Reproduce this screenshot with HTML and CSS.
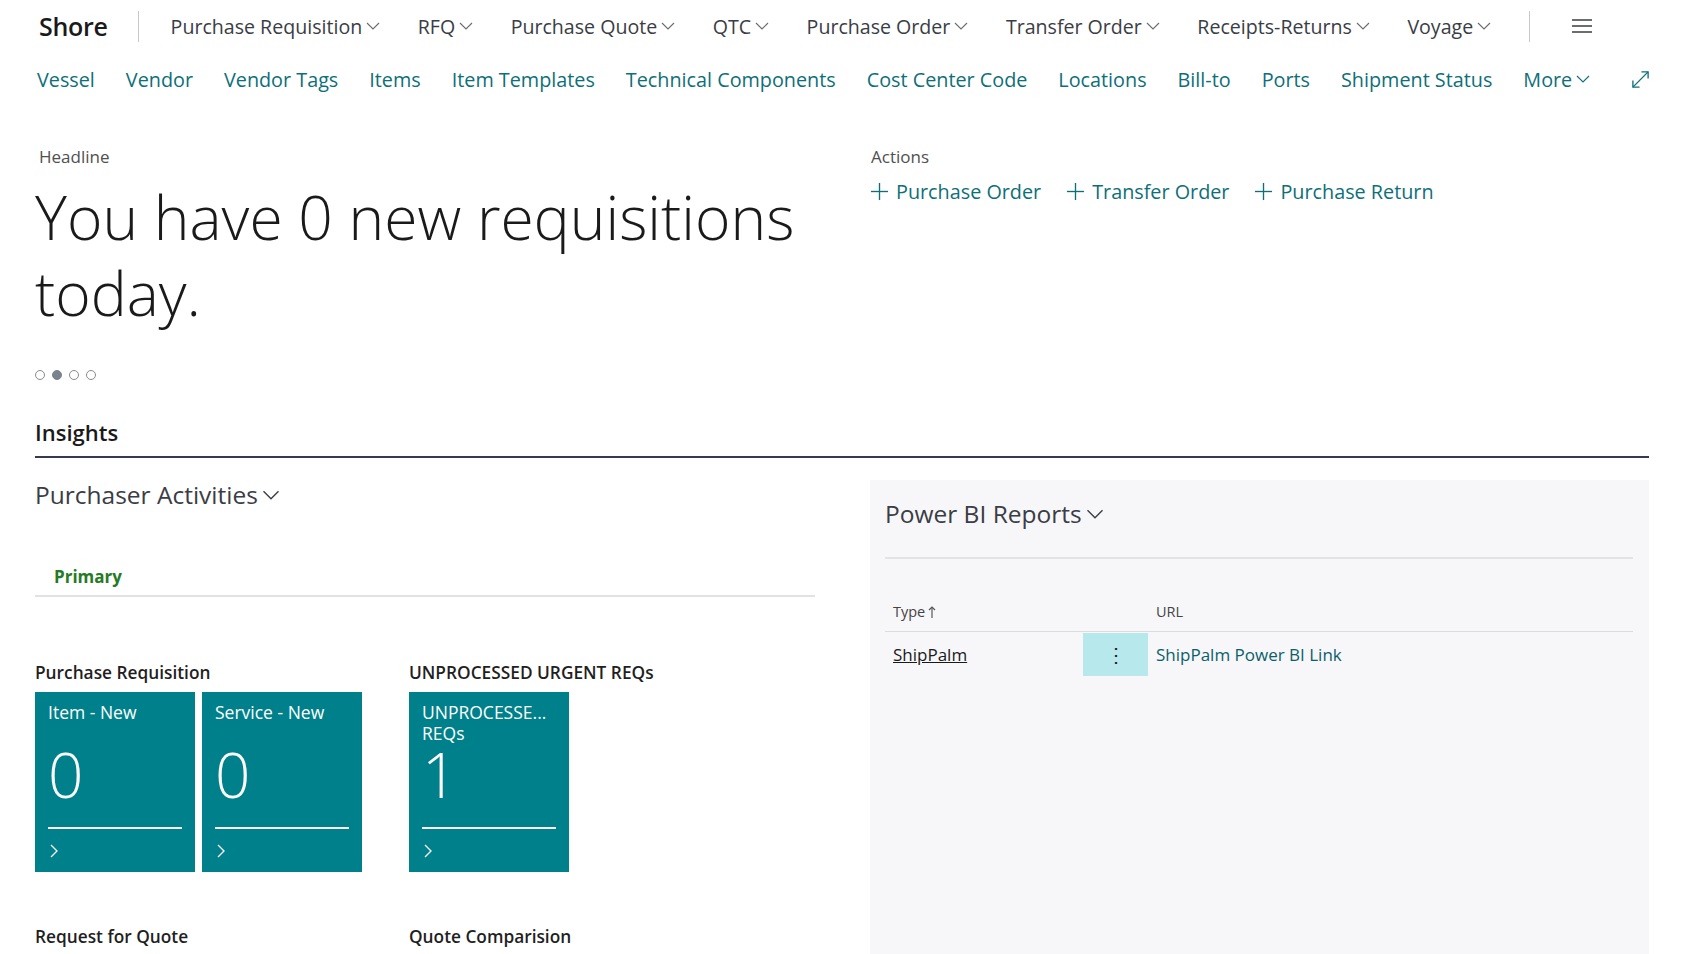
FILE: index.html
```html
<!DOCTYPE html>
<html lang="en">
<head>
<meta charset="utf-8">
<title>Shore</title>
<link rel="stylesheet" href="styles.css">
</head>
<body>
<header class="topbar">
  <div class="brand">Shore</div>
  <div class="vsep"></div>
  <nav class="menu">
    <span class="menu-item">Purchase Requisition<svg class="chev" viewBox="0 0 14 8"><polyline points="1,1 7,7 13,1"/></svg></span>
    <span class="menu-item">RFQ<svg class="chev" viewBox="0 0 14 8"><polyline points="1,1 7,7 13,1"/></svg></span>
    <span class="menu-item">Purchase Quote<svg class="chev" viewBox="0 0 14 8"><polyline points="1,1 7,7 13,1"/></svg></span>
    <span class="menu-item">QTC<svg class="chev" viewBox="0 0 14 8"><polyline points="1,1 7,7 13,1"/></svg></span>
    <span class="menu-item">Purchase Order<svg class="chev" viewBox="0 0 14 8"><polyline points="1,1 7,7 13,1"/></svg></span>
    <span class="menu-item">Transfer Order<svg class="chev" viewBox="0 0 14 8"><polyline points="1,1 7,7 13,1"/></svg></span>
    <span class="menu-item">Receipts-Returns<svg class="chev" viewBox="0 0 14 8"><polyline points="1,1 7,7 13,1"/></svg></span>
    <span class="menu-item">Voyage<svg class="chev" viewBox="0 0 14 8"><polyline points="1,1 7,7 13,1"/></svg></span>
  </nav>
  <div class="vsep vsep-right"></div>
  <svg class="hamburger" viewBox="0 0 20 14"><line x1="0" y1="1" x2="20" y2="1"/><line x1="0" y1="7" x2="20" y2="7"/><line x1="0" y1="13" x2="20" y2="13"/></svg>
</header>

<nav class="links">
  <span>Vessel</span>
  <span>Vendor</span>
  <span>Vendor Tags</span>
  <span>Items</span>
  <span>Item Templates</span>
  <span>Technical Components</span>
  <span>Cost Center Code</span>
  <span>Locations</span>
  <span>Bill-to</span>
  <span>Ports</span>
  <span>Shipment Status</span>
  <span class="more">More<svg class="chev" viewBox="0 0 14 8"><polyline points="1,1 7,7 13,1"/></svg></span>
  <svg class="expand" viewBox="0 0 20 20"><line x1="2" y1="18" x2="18" y2="2"/><polyline points="11,2 18,2 18,9"/><polyline points="2,11 2,18 9,18"/></svg>
</nav>

<main class="page">
  <section class="top-grid">
    <div class="headline">
      <div class="caption">Headline</div>
      <div class="big">You have 0 new requisitions today.</div>
      <div class="dots"><span></span><span class="on"></span><span></span><span></span></div>
    </div>
    <div class="actions">
      <div class="caption">Actions</div>
      <div class="action-list">
        <span class="action"><svg class="plus" viewBox="0 0 20 20"><line x1="10" y1="1" x2="10" y2="19"/><line x1="1" y1="10" x2="19" y2="10"/></svg>Purchase Order</span>
        <span class="action"><svg class="plus" viewBox="0 0 20 20"><line x1="10" y1="1" x2="10" y2="19"/><line x1="1" y1="10" x2="19" y2="10"/></svg>Transfer Order</span>
        <span class="action"><svg class="plus" viewBox="0 0 20 20"><line x1="10" y1="1" x2="10" y2="19"/><line x1="1" y1="10" x2="19" y2="10"/></svg>Purchase Return</span>
      </div>
    </div>
  </section>

  <h2 class="insights">Insights</h2>

  <section class="parts">
    <div class="activities">
      <div class="part-title">Purchaser Activities<svg class="chev chev-lg" viewBox="0 0 14 8"><polyline points="1,1 7,7 13,1"/></svg></div>
      <div class="tabs"><span class="tab">Primary</span></div>
      <div class="cue-grid">
        <div class="cue-group">
          <div class="cue-label">Purchase Requisition</div>
          <div class="tiles">
            <div class="tile"><div class="tile-title">Item - New</div><div class="tile-num">0</div><div class="tile-foot"><svg class="tchev" viewBox="0 0 8 14"><polyline points="1,1 7,7 1,13"/></svg></div></div>
            <div class="tile"><div class="tile-title">Service - New</div><div class="tile-num">0</div><div class="tile-foot"><svg class="tchev" viewBox="0 0 8 14"><polyline points="1,1 7,7 1,13"/></svg></div></div>
          </div>
        </div>
        <div class="cue-group">
          <div class="cue-label">UNPROCESSED URGENT REQs</div>
          <div class="tiles">
            <div class="tile"><div class="tile-title">UNPROCESSE...<br>REQs</div><div class="tile-num">1</div><div class="tile-foot"><svg class="tchev" viewBox="0 0 8 14"><polyline points="1,1 7,7 1,13"/></svg></div></div>
          </div>
        </div>
        <div class="cue-group">
          <div class="cue-label">Request for Quote</div>
        </div>
        <div class="cue-group">
          <div class="cue-label">Quote Comparision</div>
        </div>
      </div>
    </div>

    <div class="powerbi">
      <div class="part-title">Power BI Reports<svg class="chev chev-lg" viewBox="0 0 14 8"><polyline points="1,1 7,7 13,1"/></svg></div>
      <div class="pbi-rule"></div>
      <div class="table">
        <div class="thead">
          <span class="c-type">Type <svg class="sort" viewBox="0 0 8 12"><line x1="4" y1="1" x2="4" y2="12"/><polyline points="1,4 4,1 7,4"/></svg></span>
          <span class="c-menu"></span>
          <span class="c-url">URL</span>
        </div>
        <div class="trow">
          <span class="c-type"><span class="ulink">ShipPalm</span></span>
          <span class="c-menu kebab">&#8942;</span>
          <span class="c-url urllink">ShipPalm Power BI Link</span>
        </div>
      </div>
    </div>
  </section>
</main>
</body>
</html>
```
FILE: styles.css
```css
* { box-sizing: border-box; }
html, body { margin: 0; padding: 0; background: #ffffff; }
body {
  font-family: "Open Sans", "Noto Sans", sans-serif;
  color: #212121;
  width: 1696px;
  height: 954px;
  overflow: hidden;
}

.chev { width: 14px; height: 8px; fill: none; stroke: #6b6b6b; stroke-width: 1.1; margin-left: 4px; flex: none; }

/* top bar */
.topbar {
  display: flex;
  align-items: center;
  height: 52px;
  padding-left: 39px;
  white-space: nowrap;
}
.brand { font-size: 25px; font-weight: 600; color: #1a1a1a; letter-spacing: -0.3px; }
.vsep { width: 1px; height: 31px; background: #c8c8c8; margin: 0 32px 0 30px; flex: none; }
.menu { display: flex; align-items: center; gap: 37.5px; }
.menu-item { display: flex; align-items: center; font-size: 19.6px; color: #3a3d45; flex: none; }
.vsep-right { margin: 0 42px 0 38px; }
.hamburger { width: 20px; height: 14px; stroke: #3a3d45; stroke-width: 1.5; flex: none; }

/* links row */
.links {
  display: flex;
  align-items: center;
  height: 54px;
  padding-left: 37px;
  padding-right: 46px;
  gap: 31px;
  font-size: 19.8px;
  color: #0d6f79;
  white-space: nowrap;
}
.links > * { flex: none; }
.links .more { display: flex; align-items: center; }
.links .more .chev { stroke: #0d6f79; }
.expand { width: 19px; height: 19px; stroke: #0d6f79; stroke-width: 1.4; fill: none; margin-left: auto; }

/* page */
.page { padding: 0 47px 0 35px; }
.top-grid {
  display: grid;
  grid-template-columns: 780px 1fr;
  column-gap: 55px;
  padding-top: 40px;
}
.caption { font-size: 17px; color: #505050; padding-left: 4px; line-height: 22px; }
.big {
  font-size: 60.5px;
  font-weight: 300;
  line-height: 76px;
  color: #1a1a1a;
  margin-top: 11px;
}
.dots { display: flex; gap: 7px; margin-top: 39px; padding-left: 0; }
.dots span { width: 10px; height: 10px; border-radius: 50%; border: 1px solid #8a8a8a; }
.dots span.on { background: #7a828c; border-color: #7a828c; }

.actions .caption { padding-left: 1px; }
.action-list { display: flex; gap: 25px; margin-top: 10px; white-space: nowrap; }
.action { display: flex; align-items: center; font-size: 19.8px; color: #0d6f79; }
.plus { width: 19px; height: 19px; stroke: #0d6f79; stroke-width: 1.4; margin-right: 7px; }

.insights {
  margin: 37px 0 0 0;
  font-size: 22px;
  font-weight: 600;
  color: #1a1a1a;
  line-height: 30px;
  padding-bottom: 9px;
  border-bottom: 2px solid #343c4a;
}

.parts {
  display: grid;
  grid-template-columns: 780px 1fr;
  column-gap: 55px;
  margin-top: 20px;
  height: 500px;
}
.part-title { display: flex; align-items: center; font-size: 24.5px; font-weight: 400; color: #3a3d45; line-height: 34px; }
.chev-lg { width: 18px; height: 10px; margin-left: 4px; stroke: #3a3d45; }

.tabs { margin-top: 53px; border-bottom: 2px solid #e1e1e6; padding: 0 0 7px 19px; }
.tab { font-size: 17px; font-weight: 700; color: #237b23; }

.cue-grid {
  display: grid;
  grid-template-columns: 327px 327px;
  column-gap: 47px;
  row-gap: 54px;
  margin-top: 65px;
}
.cue-label { font-size: 17.3px; font-weight: 600; color: #1f1f1f; line-height: 22px; }
.tiles { display: flex; gap: 7px; margin-top: 8px; }
.tile {
  width: 160px;
  height: 180px;
  background: #00808a;
  color: #ffffff;
  padding: 10px 13px 0 13px;
  display: flex;
  flex-direction: column;
}
.tile-title { font-size: 17.5px; line-height: 21px; height: 42px; }
.tile-num { font-size: 62px; font-weight: 300; line-height: 60px; height: 82px; }
.tile-foot { border-top: 2px solid #ffffff; margin-top: 1px; padding-top: 12px; }
.tchev { width: 8px; height: 14px; stroke: #ffffff; stroke-width: 1.3; fill: none; margin-left: 2px; }

.powerbi {
  background: #f7f7f9;
  padding: 17px 16px 0 15px;
  margin-top: 2px;
  height: 500px;
}
.pbi-rule { height: 2px; background: #e3e3e6; margin-top: 26px; }
.table { margin-top: 39px; }
.thead, .trow { display: grid; grid-template-columns: 198px 65px 1fr; align-items: center; }
.thead { font-size: 14.5px; color: #444; height: 34px; border-bottom: 1px solid #dcdcdf; padding-bottom: 6px; }
.thead .c-type, .trow .c-type { padding-left: 8px; display: flex; align-items: center; }
.sort { width: 8px; height: 12px; stroke: #555; stroke-width: 1.2; fill: none; margin-left: 3px; }
.trow { height: 44px; font-size: 17px; padding-top: 1px; }
.trow .c-menu { height: 43px; }
.kebab { background: #b6e8ec; display: flex; align-items: center; justify-content: center; color: #222; font-size: 20px; }
.ulink { text-decoration: underline; color: #1a1a1a; }
.c-url { padding-left: 8px; }
.urllink { color: #0b5f6b; }
```
